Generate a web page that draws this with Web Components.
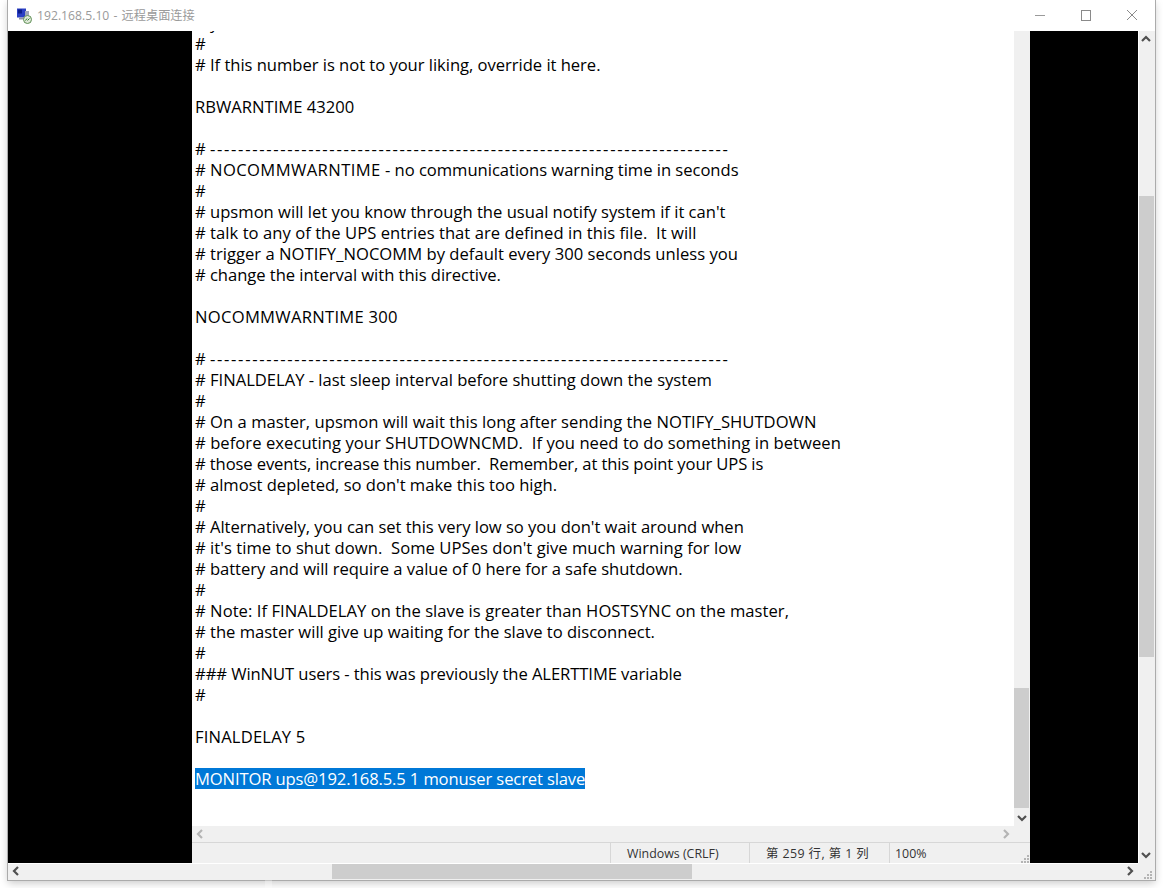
<!DOCTYPE html>
<html>
<head>
<meta charset="utf-8">
<title>remote desktop</title>
<style>
  html, body { margin: 0; padding: 0; height: 888px; overflow: hidden; background: #fff; }
</style>
</head>
<body>
<rdp-window title="192.168.5.10 - 远程桌面连接">
  <note-pad>
    <text-view></text-view>
    <status-bar></status-bar>
  </note-pad>
</rdp-window>

<script>
const arrows = {
  up: 'M-4 2 L0 -2 L4 2',
  down: 'M-4 -2 L0 2 L4 -2',
  left: 'M2 -4 L-2 0 L2 4',
  right: 'M-2 -4 L2 0 L-2 4',
};
const grip = `<svg class="grip" width="8" height="8" viewBox="0 0 8 8" fill="#b4b4b4">
  <rect x="6" y="0" width="2" height="2"/><rect x="3" y="3" width="2" height="2"/><rect x="6" y="3" width="2" height="2"/>
  <rect x="0" y="6" width="2" height="2"/><rect x="3" y="6" width="2" height="2"/><rect x="6" y="6" width="2" height="2"/></svg>`;

class ScrollBar extends HTMLElement {
  connectedCallback() {
    const horiz = this.getAttribute('dir') === 'h';
    const color = this.getAttribute('arrow') || '#505050';
    const a = horiz ? ['left', 'right'] : ['up', 'down'];
    const btn = (n, c) => `<svg class="btn" viewBox="-8 -8 16 16"><path d="${arrows[n]}" fill="none" stroke="${c}" stroke-width="2.2"/></svg>`;
    this.attachShadow({ mode: 'open' });
    this.shadowRoot.innerHTML = `
      <style>
        :host { display: flex; flex-direction: ${horiz ? 'row' : 'column'}; background: #f0f0f0; min-width: 0; min-height: 0; }
        .btn { flex: none; width: 16px; height: 16px; display: block; }
        .track { flex: 1; position: relative; min-width: 0; min-height: 0; }
        .thumb { position: absolute; background: #cdcdcd; ${horiz ? 'top: 0; bottom: 0;' : 'left: 0; right: 0;'} ${this.getAttribute('thumb') || 'display: none;'} }
      </style>
      ${btn(a[0], this.hasAttribute('no-first') ? 'transparent' : color)}<div class="track"><div class="thumb"></div></div>${btn(a[1], color)}
    `;
  }
}
customElements.define('scroll-bar', ScrollBar);

class TextView extends HTMLElement {
  constructor() {
    super();
    this.attachShadow({ mode: 'open' });
    const dashes = '--------------------------------------------------------------------------';
    // [text, letter-spacing] : the spacing evens out the width against the original font
    const lines = [
      ["# you've defined above."],
      ['#'],
      ['# If this number is not to your liking, override it here.', -0.035],
      [''],
      ['RBWARNTIME 43200'],
      [''],
      ['# <span class="dash">' + dashes + '</span>'],
      ['# <span class="caps">NOCOMMWARNTIME</span> - no communications warning time in seconds', -0.03],
      ['#'],
      ["# upsmon will let you know through the usual notify system if it can't"],
      ['# talk to any of the UPS entries that are defined in this file.  It will', 0.04],
      ['# trigger a NOTIFY_NOCOMM by default every 300 seconds unless you', 0.015],
      ['# change the interval with this directive.', -0.045],
      [''],
      ['NOCOMMWARNTIME 300', 0.28],
      [''],
      ['# <span class="dash">' + dashes + '</span>'],
      ['# FINALDELAY - last sleep interval before shutting down the system', -0.015],
      ['#'],
      ['# On a master, upsmon will wait this long after sending the NOTIFY_SHUTDOWN', 0.03],
      ['# before executing your SHUTDOWNCMD.  If you need to do something in between', 0.05],
      ['# those events, increase this number.  Remember, at this point your UPS is', -0.12],
      ["# almost depleted, so don't make this too high.", -0.02],
      ['#'],
      ["# Alternatively, you can set this very low so you don't wait around when", -0.04],
      ["# it's time to shut down.  Some UPSes don't give much warning for low", 0.04],
      ['# battery and will require a value of 0 here for a safe shutdown.', -0.045],
      ['#'],
      ['# Note: If FINALDELAY on the slave is greater than HOSTSYNC on the master,', 0.04],
      ['# the master will give up waiting for the slave to disconnect.', -0.015],
      ['#'],
      ['### WinNUT users - this was previously the ALERTTIME variable', -0.08],
      ['#'],
      [''],
      ['FINALDELAY 5', 0.17],
      [''],
    ];
    const rows = lines.map(([l, ls]) => `<div class="ln" style="letter-spacing:${ls || 0}px">${l || '&nbsp;'}</div>`).join('');
    this.shadowRoot.innerHTML = `
      <style>
        :host { display: block; overflow: hidden; background: #fff; color: #000; min-height: 0; }
        .doc { margin: -19px 0 0 3px; font: 16.6px/21px "Open Sans", sans-serif; white-space: pre; }
        .ln { height: 21px; }
        .dash { letter-spacing: 1.68px; }
        .caps { letter-spacing: .4px; }
        .sel { display: inline-block; height: 21px; background: #0078d7; color: #fff; vertical-align: top; letter-spacing: -0.13px; }
      </style>
      <div class="doc">${rows}<div class="ln"><span class="sel">MONITOR ups@192.168.5.5 1 monuser secret slave</span></div></div>
    `;
  }
}
customElements.define('text-view', TextView);

class StatusBar extends HTMLElement {
  constructor() {
    super();
    this.attachShadow({ mode: 'open' });
    this.shadowRoot.innerHTML = `
      <style>
        :host { display: flex; background: #f0f0f0; border-top: 1px solid #d7d7d7; box-sizing: border-box; height: 21px; position: relative;
          font: 12.4px/22px "Open Sans", "Noto Sans CJK SC", sans-serif; color: #333; white-space: pre; }
        .cell { box-sizing: border-box; border-left: 1px solid #d7d7d7; height: 20px; padding-left: 16px; }
        .spacer { flex: 1; }
        .eol { width: 139px; }
        .pos { width: 140px; letter-spacing: .42px; }
        .zoom { width: 141px; padding-left: 5px; }
        .grip { position: absolute; right: 1px; bottom: 0; }
      </style>
      <div class="spacer"></div>
      <div class="cell eol">Windows (CRLF)</div>
      <div class="cell pos">第 259 行, 第 1 列</div>
      <div class="cell zoom">100%</div>
      ${grip}
    `;
  }
}
customElements.define('status-bar', StatusBar);

class NotePad extends HTMLElement {
  constructor() {
    super();
    this.attachShadow({ mode: 'open' });
    this.shadowRoot.innerHTML = `
      <style>
        :host { display: grid; grid-template-columns: 1fr 16px; grid-template-rows: 1fr 16px 21px; height: 832px; background: #f0f0f0; min-width: 0; }
        .view { display: grid; min-height: 0; grid-column: 1; grid-row: 1; }
        .status { grid-column: 1 / 3; grid-row: 3; display: grid; }
        scroll-bar[dir=v] { grid-column: 2; grid-row: 1; }
        scroll-bar[dir=h] { grid-column: 1; grid-row: 2; }
      </style>
      <div class="view"><slot name="view"></slot></div>
      <scroll-bar dir="v" no-first thumb="top: 641px; height: 120px; right: 1px;"></scroll-bar>
      <scroll-bar dir="h" arrow="#b4b4b4"></scroll-bar>
      <div class="status"><slot name="status"></slot></div>
    `;
    this.querySelector('text-view').slot = 'view';
    this.querySelector('status-bar').slot = 'status';
  }
}
customElements.define('note-pad', NotePad);

class RdpWindow extends HTMLElement {
  constructor() {
    super();
    this.attachShadow({ mode: 'open' });
    this.shadowRoot.innerHTML = `
      <style>
        :host { display: block; position: relative; width: 1147px; height: 880px; margin-left: 8px; box-sizing: border-box; background: #fff;
          box-shadow: 0 0 0 1px #ababab, 0 3px 8px rgba(0,0,0,.22); }
        .bar { height: 31px; display: flex; align-items: center; background: #fff; }
        .icon { margin: 0 0 0 8px; flex: none; }
        .title { margin: -1px 0 0 5px; font: 12.2px "Open Sans", "Noto Sans CJK SC", sans-serif; word-spacing: 1px; color: #9a9a9a; flex: 1; white-space: pre; }
        .ctl { width: 46px; height: 31px; flex: none; display: block; }
        .body { display: grid; grid-template-columns: 1fr 17px; grid-template-rows: 832px 17px; }
        .desk { background: #000; display: flex; justify-content: center; min-width: 0; padding: 0 108px 0 184px; }
        ::slotted(note-pad) { flex: 1; }
        .corner { background: #f0f0f0; position: relative; }
        .corner svg { position: absolute; right: 3px; bottom: 1px; }
        scroll-bar { box-shadow: inset 0 1px #fff; }
        scroll-bar[dir=v] { box-shadow: inset 1px 0 #fff; }
        .seam { position: absolute; left: 257px; top: 100%; width: 7px; height: 8px; background: rgba(255,255,255,.3); }
      </style>
      <div class="bar">
        <svg class="icon" width="16" height="16" viewBox="0 0 16 16">
          <rect x="1" y="0.5" width="9" height="9" fill="#2a3fc4"/>
          <rect x="2" y="1.5" width="4" height="4" fill="#0b1c8c"/>
          <rect x="9" y="3" width="4" height="7" fill="#9ea4b8"/>
          <rect x="3" y="9.5" width="6" height="2" fill="#8f94a8"/>
          <circle cx="11.5" cy="11.5" r="4" fill="#dfe8d8" stroke="#5f8f55"/>
          <path d="M9.5 12.5 L11 10.5 M11.5 12.5 L13.5 10.5" stroke="#2f7d2f" stroke-width="1" fill="none"/>
        </svg>
        <span class="title">${this.getAttribute('title')}</span>
        <svg class="ctl" viewBox="0 0 46 31"><path d="M18 15.5 H28" stroke="#9a9a9a"/></svg>
        <svg class="ctl" viewBox="0 0 46 31"><rect x="18.5" y="10.5" width="9" height="10" fill="none" stroke="#8a8a8a"/></svg>
        <svg class="ctl" viewBox="0 0 46 31"><path d="M18 10 L28 20 M28 10 L18 20" stroke="#8a8a8a" fill="none"/></svg>
      </div>
      <div class="body">
        <div class="desk"><slot></slot></div>
        <scroll-bar dir="v" thumb="top: 149px; height: 461px; left: 1px; right: 1px;"></scroll-bar>
        <scroll-bar dir="h" thumb="left: 308px; width: 360px; top: 1px; bottom: 1px;"></scroll-bar>
        <div class="corner">${grip}</div>
      </div>
      <div class="seam"></div>
    `;
  }
}
customElements.define('rdp-window', RdpWindow);
</script>
</body>
</html>
